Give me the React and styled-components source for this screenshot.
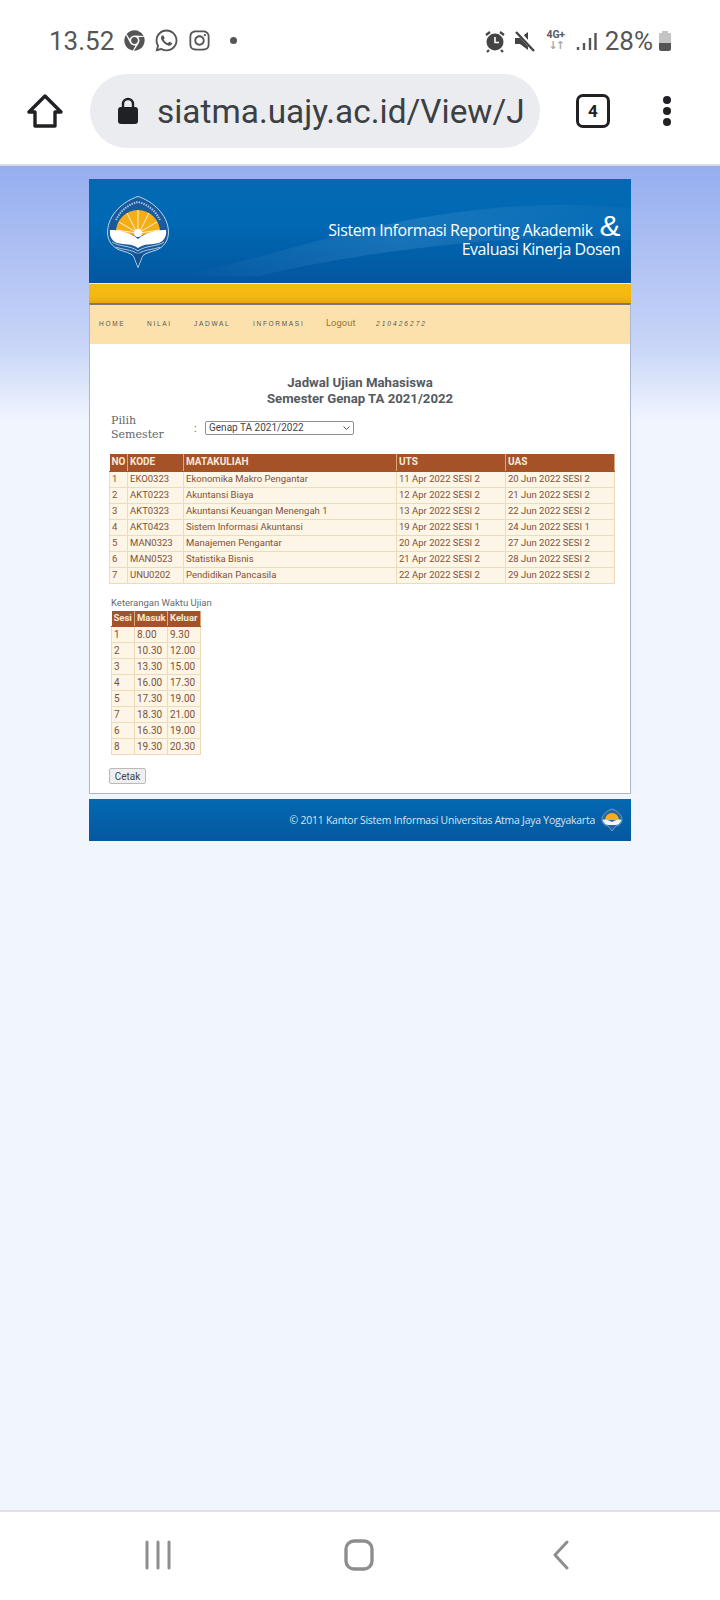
import React from "react";
import styled, { createGlobalStyle } from "styled-components";
import { FaChrome, FaWhatsapp, FaInstagram } from "react-icons/fa";

const Global = createGlobalStyle`
  html, body { margin: 0; padding: 0; background: #fff; }
  * { box-sizing: border-box; }
`;
const Screen = styled.div`
  width: 720px; height: 1600px; display: flex; flex-direction: column; overflow: hidden;
  font-family: Roboto, sans-serif; background: #fff;
`;
const StatusBar = styled.div`
  height: 72px; flex: none; display: flex; align-items: center; justify-content: space-between;
  padding: 9px 48px 0 49px; color: #5a5a5a;
`;
const StatusGroup = styled.div`display: flex; align-items: center; gap: ${p => p.$gap || 0}px;`;
const StatusText = styled.span`font-size: 26px; line-height: 30px; margin-right: ${p => p.$mr || 0}px; color: #565656;`;
const Dot = styled.span`width: 7px; height: 7px; border-radius: 50%; background: #555; margin-left: 10px;`;
const Net = styled.span`
  font-size: 10.5px; font-weight: 700; line-height: 10px; width: 24px; text-align: center; color: #5a5a5a; display: flex; flex-direction: column; letter-spacing: -.2px;
`;
const Arrows = styled.span`font-family: "DejaVu Sans", sans-serif; font-size: 11px; line-height: 11px; color: #aaa; font-weight: 700; letter-spacing: -2px;`;
const BrowserBar = styled.div`
  height: 94px; flex: none; display: flex; align-items: center; padding: 0 0 14px 0; border-bottom: 2px solid #d6dbe8;
`;
const HomeSlot = styled.div`width: 90px; display: flex; justify-content: center;`;
const Pill = styled.div`
  width: 450px; height: 74px; border-radius: 37px; background: #ebecf0; display: flex; align-items: center; padding-left: 28px; gap: 19px; overflow: hidden; flex: none;
`;
const Url = styled.span`font-size: 33.4px; color: #3c4043; white-space: nowrap;`;
const TabCount = styled.div`
  margin-left: 36px; width: 34px; height: 34px; border: 3.5px solid #202124; border-radius: 7px; display: flex; align-items: center; justify-content: center;
  font-size: 17px; font-weight: 700; color: #202124; flex: none;
`;
const Kebab = styled.div`margin-left: 53px; display: flex; flex-direction: column; gap: 3px;`;
const KebabDot = styled.span`width: 8px; height: 8px; border-radius: 50%; background: #202124;`;
const Page = styled.div`
  flex: 1; padding-top: 13px;
  background: linear-gradient(#96aef0 0, #c8d5f7 180px, #f1f5fe 255px, #f1f5fe 100%);
`;
const Wrap = styled.div`width: 542px; margin: 0 auto;`;
const Banner = styled.div`
  height: 105px; position: relative; overflow: hidden; background: linear-gradient(#0469b3, #0069b4 40%, #03569f);
  display: flex; align-items: center; padding-left: 18px; border-bottom: 1px solid #e6edf2; color: #fff;
`;
const Swoosh = styled.svg`position: absolute; inset: 0; width: 100%; height: 100%;`;
const Logo = styled.svg`position: relative; width: 62px; height: 72px; flex: none; margin-top: 1px;`;
const BannerText = styled.div`
  position: absolute; right: 11px; top: 38px; text-align: right; font-family: "Open Sans", sans-serif; font-size: 16px; line-height: 19px; letter-spacing: -.45px; font-weight: 400;
`;
const Amp = styled.span`
  display: inline-block; font-family: "Liberation Sans", sans-serif; font-size: 29px; line-height: 19px; height: 19px; margin-left: 8px; letter-spacing: 0; transform: scaleX(1.08); transform-origin: right center;
`;
const Stripe = styled.div`height: 19px; background: linear-gradient(#f6bb14, #f4b90f 60%, #eba808);`;
const Nav = styled.div`
  height: 41px; background: #fde1ad; border-top: 2px solid #76797c; border-left: 1px solid #a9b8d2; border-right: 1px solid #a9b8d2; display: flex; align-items: center; padding: 0 0 2px 9px;
`;
const NavLink = styled.span`
  font-family: "Liberation Sans", sans-serif; font-size: 6.5px; letter-spacing: 1.7px; color: #555; width: ${p => p.$w}px; flex: none;
`;
const Logout = styled.span`font-size: 9.3px; color: #97752c; width: 50px; flex: none; margin-top: -3px; letter-spacing: .1px;`;
const NavId = styled.span`font-family: "Liberation Sans", sans-serif; font-size: 6.5px; letter-spacing: 2.05px; font-style: italic; color: #555;`;
const Content = styled.div`
  background: #fff; height: 450px; border: 1px solid #a9b8d2; border-top: 0; padding: 31px 16px 0 19px; margin-bottom: 5px;
`;
const Title = styled.h1`
  margin: 0 0 8px; text-align: center; font-size: 13.2px; line-height: 15.5px; font-weight: 700; color: #555a5e; padding-right: 3px;
`;
const PickRow = styled.div`display: flex; align-items: center; padding-left: 2px; margin-bottom: 12px;`;
const PickLabel = styled.div`
  width: 83px; font-family: "DejaVu Serif", serif; font-size: 11px; line-height: 14px; color: #62666a; flex: none;
`;
const Colon = styled.span`width: 11px; font-size: 11px; color: #666; flex: none;`;
const SelectBox = styled.div`position: relative; width: 149px; height: 14px; flex: none;`;
const Select = styled.select`
  display: block; appearance: none; width: 100%; height: 100%; font-family: Roboto, sans-serif; font-size: 10px; color: #444; background: #fff; border: 1px solid #8f8f8f; border-radius: 2px; padding: 0 0 0 3px; line-height: 12px;
`;
const Chevron = styled.svg`position: absolute; right: 4px; top: 5px; width: 7px; height: 4px; pointer-events: none;`;
const Table = styled.table`
  border-collapse: collapse; table-layout: fixed; width: ${p => p.$w}px; font-size: ${p => p.$fs}px; margin: ${p => p.$m || 0};
`;
const Th = styled.th`
  background: #a55229; color: #f6e9d6; text-align: left; font-size: ${p => p.$fs || 10}px; font-weight: 700; height: ${p => p.$h || 16}px; padding: 0 0 0 2px; border-right: 1px solid #d8a878; border-bottom: 1px solid #a55229; line-height: 14px; white-space: nowrap; overflow: hidden;
`;
const Td = styled.td`
  background: #fdf5e6; color: #7d5236; height: 16px; padding: 0 0 0 2px; border: 1px solid #efdcb6; line-height: 14px; white-space: nowrap; overflow: hidden;
`;
const Note = styled.div`font-size: 9.5px; color: #666a6e; margin: 13px 0 2px 2px; line-height: 12px;`;
const Button = styled.button`
  display: block; margin-top: 13px; width: 37px; height: 16px; padding: 0; font-family: Roboto, sans-serif; font-size: 10px; color: #444; background: #efefef; border: 1px solid #bbb; border-radius: 2px;
`;
const Footer = styled.div`
  height: 42px; background: linear-gradient(#0369b2, #05589f); color: #dbe6f0; display: flex; align-items: center; justify-content: flex-end; padding-right: 8px; gap: 6px;
  font-family: "Open Sans", sans-serif; font-size: 10.4px; letter-spacing: -.2px;
`;
const FootLogo = styled.svg`width: 22px; height: 24px; flex: none;`;
const SoftNav = styled.div`
  height: 90px; flex: none; border-top: 2px solid #e0e2e8; background: #fff; display: flex; align-items: center; padding: 0 0 2px 0;
`;
const NavSlot = styled.div`width: ${p => p.$w}px; display: flex; justify-content: center; flex: none;`;

const rows = [
  ["1","EKO0323","Ekonomika Makro Pengantar","11 Apr 2022 SESI 2","20 Jun 2022 SESI 2"],
  ["2","AKT0223","Akuntansi Biaya","12 Apr 2022 SESI 2","21 Jun 2022 SESI 2"],
  ["3","AKT0323","Akuntansi Keuangan Menengah 1","13 Apr 2022 SESI 2","22 Jun 2022 SESI 2"],
  ["4","AKT0423","Sistem Informasi Akuntansi","19 Apr 2022 SESI 1","24 Jun 2022 SESI 1"],
  ["5","MAN0323","Manajemen Pengantar","20 Apr 2022 SESI 2","27 Jun 2022 SESI 2"],
  ["6","MAN0523","Statistika Bisnis","21 Apr 2022 SESI 2","28 Jun 2022 SESI 2"],
  ["7","UNU0202","Pendidikan Pancasila","22 Apr 2022 SESI 2","29 Jun 2022 SESI 2"],
];
const times = [["1","8.00","9.30"],["2","10.30","12.00"],["3","13.30","15.00"],["4","16.00","17.30"],["5","17.30","19.00"],["7","18.30","21.00"],["6","16.30","19.00"],["8","19.30","20.30"]];

const LogoMark = () => (
  <Logo viewBox="0 0 62 72">
    <path d="M31 .5C17 5 1 18 .5 36c0 9 5 15 12 18 6 2 11 3 14 6l4.500 11.500 4.500-11.500c3-3 8-4 14-6 7-3 12-9 12-18C61 18 45 5 31 .5z" fill="#1a5a9c" stroke="#cfe2f0" strokeWidth=".9"/>
    <path d="M9 24C14 14 22 8 31 6c9 2 17 8 22 18" fill="none" stroke="#9fc3e2" strokeWidth="2" strokeDasharray="1.500 1"/>
    <path d="M9 36a22 22 0 0 1 44 0c-6 0-13 1-22 5-9-4-16-5-22-5z" fill="#f5ae16"/>
    <path d="M31 14v22M20 17l9 18M42 17l-9 18M12 26l17 10M50 26L33 36M9.500 34l20 3M52.500 34l-20 3" stroke="#fff" strokeWidth=".9" opacity=".9"/>
    <circle cx="31" cy="37" r="4" fill="#fff"/>
    <path d="M3 34c9 0 20 2 28 9 8-7 19-9 28-9 1 6-2 11-7 13-8 2-14 0-21 5-7-5-13-3-21-5-5-2-8-7-7-13z" fill="#fff"/>
    <path d="M5 46c7 5 18 3 26 9 8-6 19-4 26-9M9 51c7 3 15 2 22 7 7-5 15-4 22-7" fill="none" stroke="#a8cbe8" strokeWidth="1"/>
    <path d="M26.500 59l4.500 11 4.500-11c-2-2-7-2-9 0z" fill="#15508f"/>
  </Logo>
);

export default function App() {
  return (
    <Screen>
      <Global />
      <StatusBar>
        <StatusGroup $gap={9}>
          <StatusText $mr={1}>13.52</StatusText>
          <FaChrome size={21} color="#555" />
          <FaWhatsapp size={25} color="#555" />
          <FaInstagram size={23} color="#555" />
          <Dot />
        </StatusGroup>
        <StatusGroup $gap={8}>
          <svg width="22" height="24" viewBox="0 0 22 24">
            <circle cx="11" cy="13" r="8.500" fill="#444"/>
            <path d="M11 8v5.500h4" stroke="#fff" strokeWidth="1.600" fill="none"/>
            <path d="M2 6l4-3M20 6l-4-3M5 21l-2 2M17 21l2 2" stroke="#444" strokeWidth="2.200"/>
          </svg>
          <svg width="22" height="24" viewBox="0 0 22 24">
            <path d="M1 9h5l8-6v18l-8-6H1z" fill="#444"/>
            <path d="M3 2l18 20" stroke="#fff" strokeWidth="4.500"/>
            <path d="M2 3l18 19" stroke="#444" strokeWidth="2.400"/>
          </svg>
          <Net>4G+<Arrows>↓↑</Arrows></Net>
          <svg width="21" height="24" viewBox="0 0 21 24">
            <path d="M2 18v3M8 14v7M14 9v12M19.500 4v17" stroke="#555" strokeWidth="2.400"/>
          </svg>
          <StatusText>28%</StatusText>
          <svg width="14" height="24" viewBox="0 0 14 24" style={{ marginLeft: -3 }}>
            <path d="M4 2h6v2h3v10H1V4h3z" fill="#c4c4c4"/>
            <path d="M1 14h12v6a2 2 0 0 1-2 2H3a2 2 0 0 1-2-2z" fill="#555"/>
          </svg>
        </StatusGroup>
      </StatusBar>
      <BrowserBar>
        <HomeSlot>
          <svg width="36" height="36" viewBox="0 0 36 36" fill="none" stroke="#202124" strokeWidth="3.400" strokeLinejoin="round">
            <path d="M18 3L2 19h6v14h20V19h6z" />
          </svg>
        </HomeSlot>
        <Pill>
          <svg width="20" height="29" viewBox="0 0 20 29" style={{ flex: "none", marginTop: -1 }}>
            <path d="M5 12V8a5 5 0 0 1 10 0v4" fill="none" stroke="#202124" strokeWidth="2.400"/>
            <rect x="0" y="11" width="20" height="17" rx="3" fill="#202124"/>
          </svg>
          <Url>siatma.uajy.ac.id/View/J</Url>
        </Pill>
        <TabCount>4</TabCount>
        <Kebab><KebabDot /><KebabDot /><KebabDot /></Kebab>
      </BrowserBar>
      <Page>
        <Wrap>
          <Banner>
            <Swoosh viewBox="0 0 542 105" preserveAspectRatio="none">
              <defs>
                <linearGradient id="sw" x1="0" x2="1" y1="0" y2="0">
                  <stop offset="0" stopColor="#4a94cf" stopOpacity="0"/>
                  <stop offset=".5" stopColor="#4a94cf" stopOpacity=".32"/>
                  <stop offset="1" stopColor="#4a94cf" stopOpacity=".08"/>
                </linearGradient>
              </defs>
              <path d="M85 98C170 85 270 40 420 28 C470 25 510 26 542 30V62C430 50 250 78 170 98z" fill="url(#sw)"/>
            </Swoosh>
            <LogoMark />
            <BannerText>
              Sistem Informasi Reporting Akademik<Amp>&amp;</Amp><br />Evaluasi Kinerja Dosen
            </BannerText>
          </Banner>
          <Stripe />
          <Nav>
            <NavLink $w={48}>HOME</NavLink>
            <NavLink $w={47}>NILAI</NavLink>
            <NavLink $w={59}>JADWAL</NavLink>
            <NavLink $w={73}>INFORMASI</NavLink>
            <Logout>Logout</Logout>
            <NavId>210426272</NavId>
          </Nav>
          <Content>
            <Title>Jadwal Ujian Mahasiswa<br />Semester Genap TA 2021/2022</Title>
            <PickRow>
              <PickLabel>Pilih<br />Semester</PickLabel>
              <Colon>:</Colon>
              <SelectBox>
                <Select defaultValue="g"><option value="g">Genap TA 2021/2022</option></Select>
                <Chevron viewBox="0 0 7 4"><path d="M.5.5l3 3 3-3" fill="none" stroke="#555" strokeWidth="1"/></Chevron>
              </SelectBox>
            </PickRow>
            <Table $w={505} $fs={9.5}>
              <colgroup>
                <col width="18" /><col width="56" /><col width="213" /><col width="109" /><col width="109" />
              </colgroup>
              <thead><tr>{["NO","KODE","MATAKULIAH","UTS","UAS"].map(h => <Th key={h} $h={17}>{h}</Th>)}</tr></thead>
              <tbody>{rows.map(r => <tr key={r[0]}>{r.map((c, i) => <Td key={i}>{c}</Td>)}</tr>)}</tbody>
            </Table>
            <Note>Keterangan Waktu Ujian</Note>
            <Table $w={89} $fs={10} $m="0 0 0 2px">
              <colgroup><col width="23" /><col width="33" /><col width="33" /></colgroup>
              <thead><tr>{["Sesi","Masuk","Keluar"].map(h => <Th key={h} $fs={9.5}>{h}</Th>)}</tr></thead>
              <tbody>{times.map(r => <tr key={r[0]}>{r.map((c, i) => <Td key={i}>{c}</Td>)}</tr>)}</tbody>
            </Table>
            <Button>Cetak</Button>
          </Content>
          <Footer>
            © 2011 Kantor Sistem Informasi Universitas Atma Jaya Yogyakarta
            <FootLogo viewBox="0 0 22 24">
              <path d="M11 1C5 3 1 7 1 12c0 3 3 6 6 6l4 5 4-5c3 0 6-3 6-6 0-5-4-9-10-11z" fill="#2a659f" stroke="#bcd3e6" strokeWidth=".5"/>
              <path d="M4 12a7 7 0 0 1 14 0z" fill="#f4ae1a"/>
              <path d="M1.500 12c3-1 6 0 9.500 2 3.500-2 6.500-3 9.500-2-1 3-3 5-6 5H7.500c-3 0-5-2-6-5z" fill="#f2f4f6"/>
            </FootLogo>
          </Footer>
        </Wrap>
      </Page>
      <SoftNav>
        <NavSlot $w={315}>
          <svg width="28" height="30" viewBox="0 0 28 30" stroke="#8e8e8e" strokeWidth="3" strokeLinecap="round"><path d="M3 2v26M14 2v26M25 2v26"/></svg>
        </NavSlot>
        <NavSlot $w={88}>
          <svg width="30" height="32" viewBox="0 0 30 32" fill="none" stroke="#8e8e8e" strokeWidth="3.400"><rect x="2" y="2" width="26" height="28" rx="8"/></svg>
        </NavSlot>
        <NavSlot $w={315}>
          <svg width="18" height="30" viewBox="0 0 18 30" fill="none" stroke="#8e8e8e" strokeWidth="3" strokeLinecap="round" strokeLinejoin="round"><path d="M15 2L3 15l12 13"/></svg>
        </NavSlot>
      </SoftNav>
    </Screen>
  );
}
